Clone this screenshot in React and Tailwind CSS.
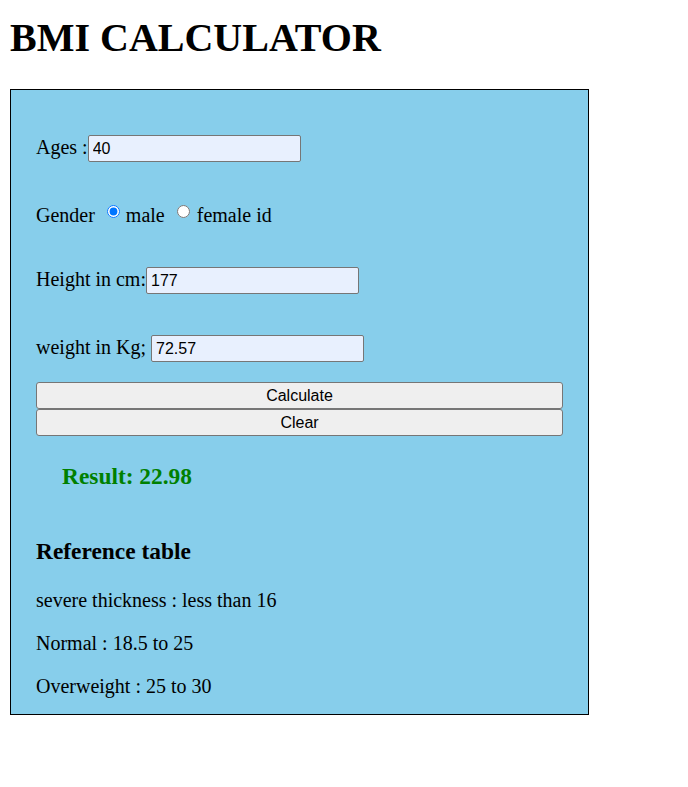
export default function App() {
  const rows = [
    "severe thickness : less than 16",
    "Normal : 18.5 to 25",
    "Overweight : 25 to 30",
  ];

  const inputCls =
    "w-[213px] h-[27px] rounded-[2px] border border-[#767676] bg-[#e8f0fe] pl-[4px] font-['Liberation_Sans',Arial,sans-serif] text-[16px] text-black outline-none";

  return (
    <div className="min-h-screen bg-white p-[10px] font-['Liberation_Serif','Times_New_Roman',serif] text-black">
      <h1 className="mt-[5px] mb-[28px] text-[40px] font-bold leading-[46px]">BMI CALCULATOR</h1>

      <div className="w-[579px] border border-black bg-[#87ceeb] pl-[25px] pr-[25px] pt-[45px] pb-[16px] text-[20px] leading-[23px]">
        <div className="flex items-start h-[27px]">
          <span className="pt-[1px]">Ages :</span>
          <input defaultValue="40" className={inputCls} />
        </div>

        <div className="mt-[42px] flex items-start h-[23px]">
          <span>Gender</span>
          <input type="radio" name="g" defaultChecked className="ml-[12px] mt-[1px] w-[13px] h-[13px] accent-[#0075ff]" />
          <span className="ml-[6px]">male</span>
          <input type="radio" name="g" className="ml-[12px] mt-[1px] w-[13px] h-[13px]" />
          <span className="ml-[7px]">female id</span>
        </div>

        <div className="mt-[40px] flex items-start h-[27px]">
          <span className="pt-[1px]">Height in cm:</span>
          <input defaultValue="177" className={inputCls} />
        </div>

        <div className="mt-[41px] flex items-start h-[27px]">
          <span className="pt-[1px]">weight in Kg;</span>
          <input defaultValue="72.57" className={`ml-[5px] ${inputCls}`} />
        </div>

        <div className="mt-[20px] flex flex-col font-['Liberation_Sans',Arial,sans-serif] text-[16px] leading-[18px]">
          <button className="h-[27px] w-full rounded-[3px] border border-[#767676] bg-[#efefef] text-black">Calculate</button>
          <button className="h-[27px] w-full rounded-[3px] border border-[#767676] bg-[#efefef] text-black">Clear</button>
        </div>

        <div className="mt-[27px] ml-[26px] text-[23.4px] font-bold leading-[27px] text-[#008000]">Result: 22.98</div>

        <h3 className="mt-[48px] text-[23.4px] font-bold leading-[27px]">Reference table</h3>

        <div className="mt-[24px] flex flex-col gap-[20px]">
          {rows.map((r) => (
            <p key={r}>{r}</p>
          ))}
        </div>
      </div>
    </div>
  );
}
